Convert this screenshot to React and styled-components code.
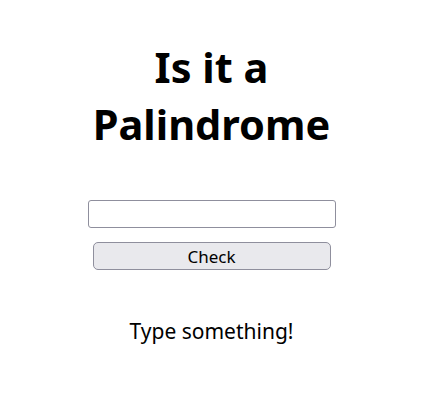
import styled, { createGlobalStyle } from "styled-components";
import { useState } from "react";

const GlobalStyle = createGlobalStyle`
  body {
    margin: 0;
    background: #ffffff;
    font-family: "Noto Sans", "Open Sans", sans-serif;
    color: #000;
  }
`;

const Root = styled.div`
  display: flex;
  flex-direction: column;
  align-items: center;
  padding: 39px 6px 0 0;
`;

const Heading = styled.h1`
  margin: 0;
  width: 260px;
  font-size: 41.5px;
  font-weight: 700;
  line-height: 57px;
  text-align: center;
`;

const Form = styled.div`
  display: flex;
  flex-direction: column;
  align-items: center;
  gap: 14px;
  margin-top: 47px;
`;

const Input = styled.input`
  box-sizing: border-box;
  width: 248px;
  height: 28px;
  border: 1px solid #8f8f9d;
  border-radius: 3px;
  font-family: inherit;
  font-size: 16px;
  padding: 0 6px;
`;

const Button = styled.button`
  box-sizing: border-box;
  width: 238px;
  height: 28px;
  border: 1px solid #8f8f9d;
  border-radius: 5px;
  background: #e9e9ed;
  font-family: inherit;
  font-size: 17px;
  color: #000;
  padding: 0;
`;

const Result = styled.p`
  margin: 47px 0 0;
  font-size: 21px;
`;

const App = () => {
  const [text, setText] = useState("")
  const [msg, setMsg] = useState("Type something!")

  const handleCheck = () => {
    const clean = text.toLowerCase().replace(/[^a-z0-9]/g, "")
    if (!clean) return setMsg("Type something!")
    setMsg(clean === clean.split("").reverse().join("") ? "It's a palindrome!" : "Not a palindrome")
  }

  return (
    <Root>
      <GlobalStyle />
      <Heading>Is it a Palindrome</Heading>
      <Form>
        <Input value={text} onChange={(e) => setText(e.target.value)} />
        <Button onClick={handleCheck}>Check</Button>
      </Form>
      <Result>{msg}</Result>
    </Root>
  )
}

export default App
